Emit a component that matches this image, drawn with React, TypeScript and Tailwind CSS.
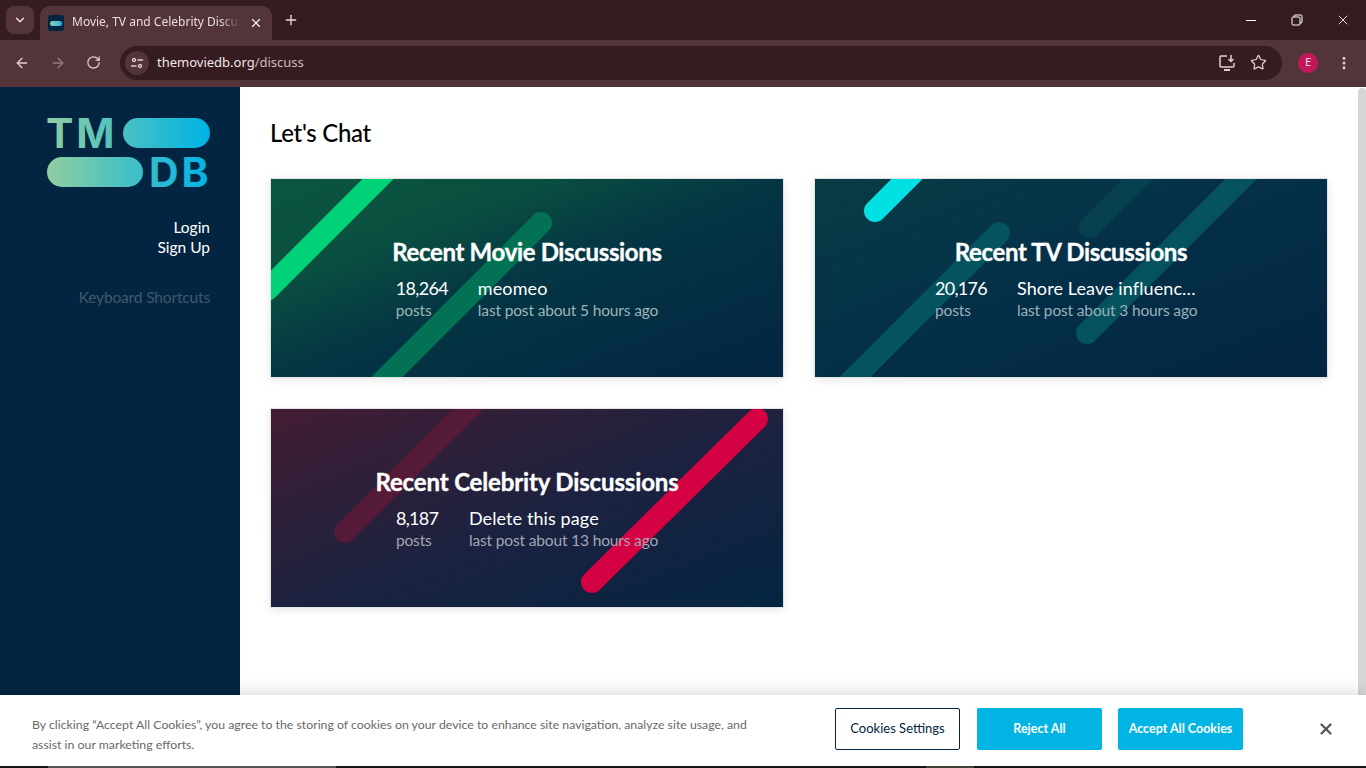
import { ChevronDown, X, Plus, ArrowLeft, ArrowRight, RotateCw, Star, MoreVertical } from 'lucide-react'

const sans = '[font-family:"Lato","Noto_Sans",sans-serif]'

type Stripe = { x1: number; y1: number; x2: number; y2: number; color: string }

type Discussion = {
  title: string
  count: string
  latest: string
  when: string
  bg: string
  stripes: Stripe[]
  countWidth: string
  nameWidth: string
  titleTracking: string
  subColor: string
}

const discussions: Discussion[] = [
  {
    title: 'Recent Movie Discussions',
    count: '18,264',
    latest: 'meomeo',
    when: 'last post about 5 hours ago',
    bg: 'bg-[linear-gradient(to_bottom_right,#0b5540_0%,#0a5040_25%,#043644_50%,#032541_100%)]',
    countWidth: 'w-[82px]',
    nameWidth: 'w-auto',
    titleTracking: 'tracking-[-0.35px]',
    subColor: 'text-[#9db5b5]',
    stripes: [
      { x1: 116, y1: -9, x2: -4, y2: 111, color: '#01d277' },
      { x1: 270, y1: 44, x2: 100, y2: 214, color: '#037254' },
    ],
  },
  {
    title: 'Recent TV Discussions',
    count: '20,176',
    latest: 'Shore Leave influenc…',
    when: 'last post about 3 hours ago',
    bg: 'bg-[linear-gradient(to_bottom_right,#083c45_0%,#042f48_50%,#032541_100%)]',
    countWidth: 'w-[82px]',
    nameWidth: 'w-[190px]',
    titleTracking: 'tracking-[-0.35px]',
    subColor: 'text-[#9ab0b9]',
    stripes: [
      { x1: 184, y1: 54, x2: 16, y2: 222, color: '#04535f' },
      { x1: 275, y1: 48, x2: 333, y2: -10, color: '#07414f' },
      { x1: 272, y1: 154, x2: 446, y2: -20, color: '#04535f' },
      { x1: 60, y1: 32, x2: 113, y2: -21, color: '#01e1e3' },
    ],
  },
  {
    title: 'Recent Celebrity Discussions',
    count: '8,187',
    latest: 'Delete this page',
    when: 'last post about 13 hours ago',
    bg: 'bg-[linear-gradient(to_bottom_right,#431c34_0%,#2c2039_30%,#1c2240_52%,#032541_100%)]',
    countWidth: 'w-[73px]',
    nameWidth: 'w-auto',
    titleTracking: 'tracking-[-0.15px]',
    subColor: 'text-[#a5a5b5]',
    stripes: [
      { x1: 74, y1: 123, x2: 210, y2: -13, color: '#551a38' },
      { x1: 321, y1: 173, x2: 486, y2: 10, color: '#d40242' },
    ],
  },
]

function DiscussionCard({ d }: { d: Discussion }) {
  return (
    <div className={`relative h-[200px] overflow-hidden border border-[#e3e3e3] shadow-[0_2px_8px_rgba(0,0,0,0.1)] ${d.bg}`}>
      <svg className="absolute inset-0 h-full w-full" viewBox="0 0 512 198" preserveAspectRatio="none">
        {d.stripes.map((s, i) => (
          <line key={i} x1={s.x1} y1={s.y1} x2={s.x2} y2={s.y2} stroke={s.color} strokeWidth={22} strokeLinecap="round" />
        ))}
      </svg>
      <div className="relative flex h-full flex-col items-center justify-center pt-[2px] text-white">
        <h2 className={`text-[24px] leading-[30px] font-bold whitespace-nowrap [-webkit-text-stroke:0.35px_white] ${d.titleTracking}`}>{d.title}</h2>
        <div className="mt-[10px] flex">
          <div className={d.countWidth}>
            <p className="text-[18px] leading-[23px] tracking-[-0.7px]">{d.count}</p>
            <p className={`text-[15.5px] leading-[21px] tracking-[-0.15px] ${d.subColor}`}>posts</p>
          </div>
          <div className={d.nameWidth}>
            <p className="text-[18px] leading-[23px] tracking-[0.1px] whitespace-nowrap">{d.latest}</p>
            <p className={`text-[15.5px] leading-[21px] tracking-[-0.15px] ${d.subColor}`}>{d.when}</p>
          </div>
        </div>
      </div>
    </div>
  )
}

function TmdbLogo() {
  return (
    <svg width="163" height="70" viewBox="0 0 163 70" className="block overflow-visible">
      <defs>
        <linearGradient id="tmdb" x1="0" y1="0" x2="163" y2="0" gradientUnits="userSpaceOnUse">
          <stop offset="0" stopColor="#90cea1" />
          <stop offset="0.56" stopColor="#3cbec9" />
          <stop offset="1" stopColor="#00b3e5" />
        </linearGradient>
      </defs>
      <text x="-1" y="30.500" fill="url(#tmdb)" fontFamily="Inter, Lato, sans-serif" fontWeight="700" fontSize="41" letterSpacing="2.8">TM</text>
      <rect x="76" y="1" width="87" height="30" rx="15" fill="url(#tmdb)" />
      <rect x="0" y="40" width="96" height="30" rx="15" fill="url(#tmdb)" />
      <text x="102" y="70" fill="url(#tmdb)" fontFamily="Inter, Lato, sans-serif" fontWeight="700" fontSize="41" letterSpacing="3">DB</text>
    </svg>
  )
}

function BrowserChrome() {
  return (
    <div className="shrink-0 [font-family:'Noto_Sans',sans-serif]">
      {/* tab strip */}
      <div className="flex h-[40px] items-end bg-[#351c21] text-[#e9dcdd]">
        <div className="mb-[6px] ml-[6px] flex h-[28px] w-[28px] items-center justify-center rounded-[8px] bg-[#533539]">
          <ChevronDown size={14} strokeWidth={2.5} />
        </div>
        <div className="ml-[6px] flex h-[34px] w-[232px] items-center rounded-t-[10px] bg-[#533539] pl-[8px]">
          <div className="flex h-[16px] w-[16px] items-center justify-center rounded-[3px] bg-[#032541]">
            <div className="h-[5px] w-[12px] rounded-full bg-gradient-to-r from-[#90cea1] to-[#00b3e5]" />
          </div>
          <span className="ml-[8px] w-[168px] overflow-hidden pb-[2px] text-[12px] whitespace-nowrap [mask-image:linear-gradient(to_right,black_88%,transparent)]">
            Movie, TV and Celebrity Discussions
          </span>
          <X size={14} strokeWidth={2} className="ml-[9px] text-white" />
        </div>
        <div className="mb-[6px] ml-[11px] flex h-[28px] items-center">
          <Plus size={16} strokeWidth={2} />
        </div>
        <div className="mb-[12px] ml-auto flex items-center text-white">
          <div className="flex w-[46px] justify-center">
            <svg width="10" height="12" viewBox="0 0 10 12" stroke="currentColor"><path d="M0 6.500H10" /></svg>
          </div>
          <div className="flex w-[46px] justify-center">
            <svg width="12" height="12" viewBox="0 0 12 12" fill="none" stroke="currentColor">
              <rect x="1" y="3" width="8" height="8" rx="1" />
              <path d="M3 3V2a1 1 0 0 1 1-1h6a1 1 0 0 1 1 1v6a1 1 0 0 1-1 1H9" />
            </svg>
          </div>
          <div className="flex w-[46px] justify-center"><X size={16} strokeWidth={1.25} /></div>
        </div>
      </div>
      {/* toolbar */}
      <div className="flex h-[47px] items-center bg-[#533539] pb-[2px] text-[#e0cfd2]">
        <ArrowLeft size={16} strokeWidth={2} className="ml-[14px]" />
        <ArrowRight size={16} strokeWidth={2} className="ml-[20px] text-[#927d80]" />
        <RotateCw size={15} strokeWidth={2} className="ml-[20px]" />
        <div className="ml-[19px] flex h-[34px] w-[1162px] items-center rounded-full bg-[#351c21] pl-[5px]">
          <div className="flex h-[24px] w-[24px] items-center justify-center rounded-full bg-[#533539]">
            <svg width="14" height="14" viewBox="0 0 14 14" fill="none" stroke="currentColor" strokeWidth="1.3">
              <circle cx="4" cy="4" r="1.5" />
              <path d="M7.5 4H13M1 10h5.5" />
              <circle cx="10" cy="10" r="1.5" />
            </svg>
          </div>
          <span className="ml-[8px] pt-[1px] text-[13px] text-[#f1e6e7]">
            themoviedb.org<span className="text-[#cdbcbf]">/discuss</span>
          </span>
          <svg width="18" height="18" viewBox="0 0 18 18" fill="none" stroke="currentColor" strokeWidth="1.5" className="mr-[14px] ml-auto">
            <path d="M9 2H3a1 1 0 0 0-1 1v9a1 1 0 0 0 1 1h12a1 1 0 0 0 1-1V9" />
            <path d="M6 16h6" strokeWidth="2" />
            <path d="M13 1v6M10.5 5 13 7.5 15.500 5" />
          </svg>
          <Star size={17} strokeWidth={1.75} className="mr-[15px]" />
        </div>
        <div className="ml-[16px] flex h-[20px] w-[20px] items-center justify-center rounded-full bg-[#c2185b] text-[11px] text-[#f7dfe8]">E</div>
        <MoreVertical size={16} strokeWidth={2.5} className="ml-[18px]" />
      </div>
    </div>
  )
}

function CookieBanner() {
  return (
    <div className="absolute inset-x-0 bottom-0 flex h-[73px] flex-col bg-white shadow-[0_0_18px_rgba(0,0,0,0.2)]">
      <div className="flex flex-1 items-center pb-[3px]">
        <p className="ml-[32px] w-[740px] pt-[11px] text-[12.300px] leading-[20px] text-[#696969]">
          By clicking “Accept All Cookies”, you agree to the storing of cookies on your device to enhance site navigation, analyze site usage, and assist in our marketing efforts.
        </p>
        <button className="ml-[63px] h-[42px] w-[125px] rounded-[2px] border border-[#032541] bg-white text-[13px] text-[#032541]">Cookies Settings</button>
        <button className="ml-[17px] h-[42px] w-[125px] rounded-[2px] bg-[#01b4e4] text-[12.500px] font-bold text-white">Reject All</button>
        <button className="ml-[16px] h-[42px] w-[125px] rounded-[2px] bg-[#01b4e4] text-[12.500px] font-bold text-white">Accept All Cookies</button>
        <X size={18} strokeWidth={3} className="ml-[74px] text-[#565656]" />
      </div>
      {/* sliver of the OS taskbar under the window */}
      <div className="flex h-[2px] bg-[#14170f]">
        <div className="ml-[48px] w-[288px] bg-[#555555]" />
        <div className="ml-[590px] w-[48px] bg-[#3e4236]" />
      </div>
    </div>
  )
}

export default function App() {
  return (
    <div className={`relative flex h-screen flex-col overflow-hidden bg-white ${sans}`}>
      <BrowserChrome />
      <div className="flex min-h-0 flex-1">
        <aside className="flex w-[240px] shrink-0 flex-col items-end bg-[#032541] pt-[30px] pr-[30px] text-[15.500px] leading-[20px] text-white">
          <TmdbLogo />
          <a className="mt-[30px]">Login</a>
          <a>Sign Up</a>
          <a className="mt-[30px] tracking-[-0.15px] text-[#43576b]">Keyboard Shortcuts</a>
        </aside>
        <main className="min-w-0 flex-1 px-[30px] pt-[30px]">
          <h1 className="text-[24px] leading-[31px] font-medium tracking-[-0.3px] text-black">Let's Chat</h1>
          <div className="mt-[30px] grid grid-cols-2 gap-[30px]">
            {discussions.map(d => (
              <DiscussionCard key={d.title} d={d} />
            ))}
          </div>
        </main>
        <div className="w-[8px] shrink-0 bg-white pt-[1px]">
          <div className="h-[612px] rounded-t-full bg-[#d6d6d6]" />
        </div>
      </div>
      <CookieBanner />
    </div>
  )
}
